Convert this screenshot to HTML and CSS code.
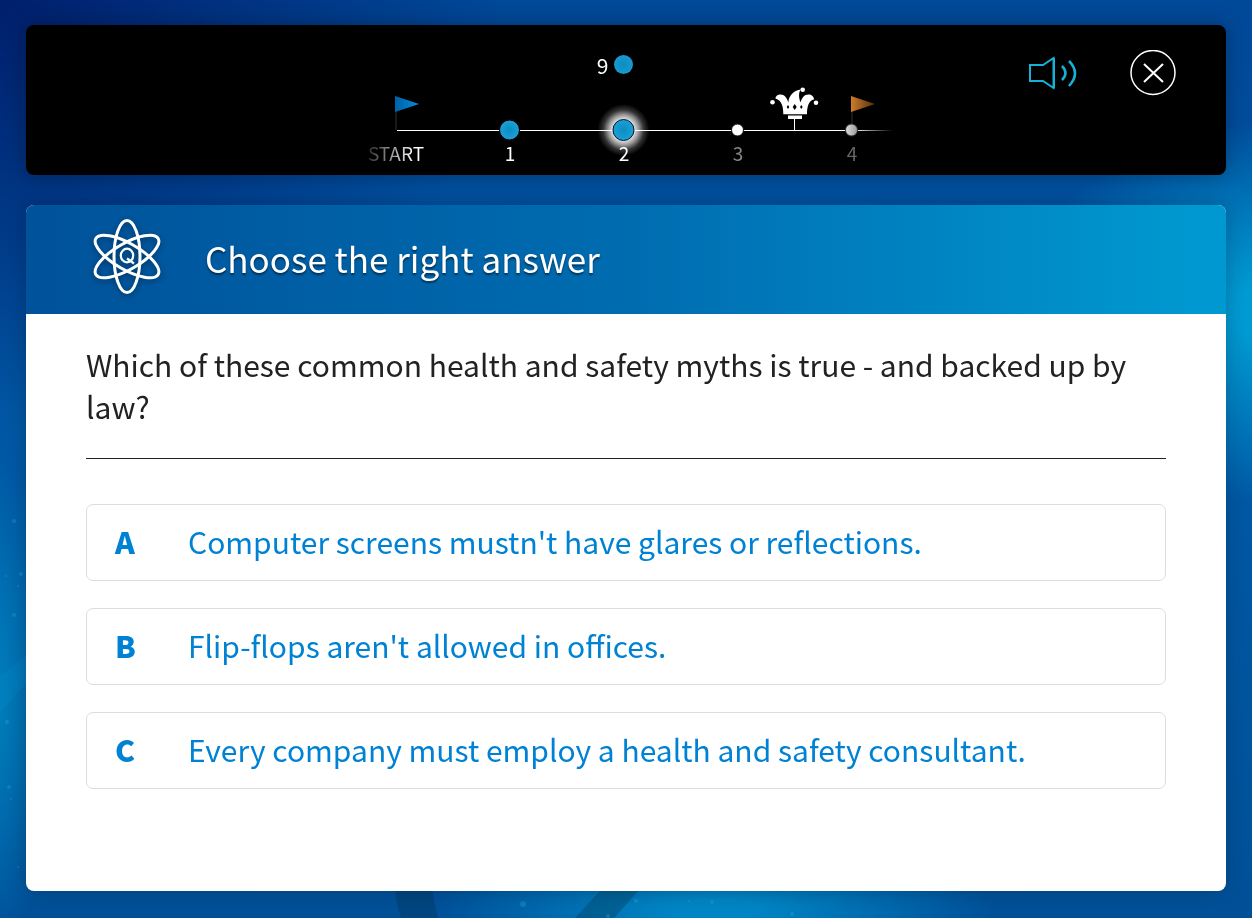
FILE: index.html
```html
<!DOCTYPE html>
<html lang="en">
<head>
<meta charset="utf-8">
<title>Quiz – Choose the right answer</title>
<link rel="stylesheet" href="styles.css">
</head>
<body>
<svg class="backdrop" viewBox="0 0 1252 918" preserveAspectRatio="none" aria-hidden="true">
  <path d="M394 880Q395 900 401 918H438Q433 900 432 880Z" fill="#003a63" opacity=".5"/>
  <path d="M610 880L575 918H614L648 880Z" fill="#004a70" opacity=".5"/>
  <path d="M0 676L26 656V684L0 712Z" fill="#00a0d8" opacity=".15"/>
  <g fill="#2ab4e4" opacity=".3">
    <circle cx="14" cy="521" r="2"/><circle cx="21" cy="574" r="2"/><circle cx="6" cy="576" r="1"/>
    <circle cx="18" cy="586" r="1"/><circle cx="14" cy="615" r="2"/><circle cx="7" cy="722" r="2"/>
    <circle cx="9" cy="787" r="2"/><circle cx="11" cy="799" r="1"/><circle cx="18" cy="867" r="1"/>
    <circle cx="523" cy="904" r="3"/><circle cx="608" cy="916" r="2"/><circle cx="636" cy="901" r="2"/>
    <circle cx="689" cy="901" r="1"/><circle cx="712" cy="902" r="2"/><circle cx="792" cy="914" r="2"/>
  </g>
</svg>
<div class="page">
  <header class="topbar">
    <div class="track">
      <div class="score"><span>9</span><i class="token"></i></div>
      <svg class="route" viewBox="0 0 570 63" aria-hidden="true">
        <defs>
          <linearGradient id="line"><stop offset="0" stop-color="#fff"/><stop offset=".92" stop-color="#fff"/><stop offset="1" stop-color="#fff" stop-opacity="0"/></linearGradient>
          <linearGradient id="blueFlag"><stop offset="0" stop-color="#0060a8"/><stop offset="1" stop-color="#0090e0"/></linearGradient>
          <linearGradient id="orangeFlag"><stop offset="0" stop-color="#cd7a2c"/><stop offset="1" stop-color="#553010"/></linearGradient>
          <linearGradient id="grey"><stop offset="0" stop-color="#ddd"/><stop offset="1" stop-color="#999"/></linearGradient>
          <radialGradient id="dot"><stop offset="0" stop-color="#0d8cc0"/><stop offset="1" stop-color="#1aa0d8"/></radialGradient>
          <radialGradient id="glow"><stop offset=".4" stop-color="#fff" stop-opacity=".9"/><stop offset=".58" stop-color="#fff" stop-opacity=".6"/><stop offset=".78" stop-color="#fff" stop-opacity=".2"/><stop offset="1" stop-color="#fff" stop-opacity="0"/></radialGradient>
        </defs>
        <rect x="58" y="50" width="496" height="1" fill="url(#line)"/>
        <path d="M57 31V50M513 31V46" stroke="#333"/>
        <path d="M56 16L80 24L56 32Z" fill="url(#blueFlag)"/>
        <path d="M512 16L536 24L512 32Z" fill="url(#orangeFlag)"/>
        <circle cx="284.500" cy="50" r="26" fill="url(#glow)"/>
        <circle cx="170.500" cy="50" r="10" fill="url(#dot)" stroke="#000"/>
        <circle cx="284.500" cy="50" r="10.500" fill="url(#dot)" stroke="#001522"/>
        <circle cx="398.500" cy="50" r="6" fill="#fff" stroke="#111"/>
        <circle cx="512.500" cy="50" r="6" fill="url(#grey)" stroke="#333"/>
        <g fill="#fff">
          <path d="M444.300 34.300C444.300 27 443 20.500 436.500 18.500C436.500 16 439 14.500 441.500 14.500C445.500 14.500 448 18 449.300 22.500C450 16 454 10.500 462 9.500C459.500 12 459.500 17 461.500 22.500C463 18 465 14.500 469.500 14.500C472.500 14.500 475 16.500 475 19.500C469.500 20.500 468 27 468 34.300Z"/>
          <circle cx="433.500" cy="22.300" r="2.300"/><circle cx="463.700" cy="9.700" r="2.300"/><circle cx="477" cy="22.700" r="2.300"/>
          <path d="M449 35.500H463V39H449Z"/><path d="M455 39H456V50H455Z"/>
        </g>
        <path d="M449 25L450.300 27L449 29L447.700 27ZM455.700 24L457.700 27L455.700 30L453.700 27ZM462.300 25L463.600 27L462.300 29L461 27Z"/>
      </svg>
      <ol class="labels">
        <li class="start">START</li><li>1</li><li>2</li><li class="dim">3</li><li class="dim far">4</li>
      </ol>
    </div>
    <div class="controls">
      <button class="icon-button" type="button" aria-label="Toggle sound">
        <svg class="speaker" viewBox="0 0 50 36" fill="none" stroke="#14b2d8"><path d="M2 10H15L25.500 3V33L15 26H2Z" stroke-width="2"/><path d="M26 3V33" stroke-width="2"/><path d="M34 11Q41 18 34 25M41 6Q53 18 41 31" stroke-width="2.500"/></svg>
      </button>
      <button class="icon-button" type="button" aria-label="Close">
        <svg class="close" viewBox="0 0 46 46" fill="none" stroke="#fff"><circle cx="23" cy="22.500" r="22" stroke-width="1.500"/><path d="M14 14L33 32M33 14L14 32" stroke-width="2"/></svg>
      </button>
    </div>
  </header>
  <main class="card">
    <div class="card-head">
      <svg class="atom" viewBox="0 0 80 84" fill="none" stroke="#fff" stroke-width="3" aria-hidden="true">
        <ellipse cx="40" cy="41.500" rx="13" ry="36"/>
        <ellipse cx="40" cy="41.500" rx="13" ry="36" transform="rotate(60 40 41.500)"/>
        <ellipse cx="40" cy="41.500" rx="13" ry="36" transform="rotate(-60 40 41.500)"/>
        <ellipse cx="40" cy="40.500" rx="6.200" ry="6.800" stroke-width="2.200"/><path d="M40 43.500L47 48.500" stroke-width="2.200"/>
      </svg>
      <h1>Choose the right answer</h1>
    </div>
    <div class="card-body">
      <p class="question">Which of these common health and safety myths is true - and backed up by law?</p>
      <div class="answers">
        <button class="answer" type="button"><b>A</b><span>Computer screens mustn't have glares or reflections.</span></button>
        <button class="answer" type="button"><b>B</b><span>Flip-flops aren't allowed in offices.</span></button>
        <button class="answer" type="button"><b>C</b><span>Every company must employ a health and safety consultant.</span></button>
      </div>
    </div>
  </main>
</div>
</body>
</html>
```
FILE: styles.css
```css
* { box-sizing: border-box; }

body {
  margin: 0;
  font-family: "Noto Sans CJK SC", "Noto Sans", sans-serif;
  background:
    radial-gradient(ellipse 260px 190px at 102% 34%, #009ad2 15%, transparent),
    radial-gradient(ellipse 100px 250px at -2% 76%, #0086c0 5%, transparent),
    radial-gradient(ellipse 280px 60px at 57% 99%, #0085c4 15%, transparent),
    radial-gradient(ellipse 500px 420px at 0 0, #001f6c, transparent),
    linear-gradient(#004898, #0058a4 50%, #005098);
}

.backdrop { position: fixed; inset: 0; width: 100%; height: 100%; z-index: -1; }

.page {
  min-height: 100vh;
  padding: 25px 26px 27px;
  display: flex;
  flex-direction: column;
  gap: 30px;
}

.topbar {
  display: grid;
  grid-template-columns: 1fr 570px 1fr;
  padding: 24px 50px 13px 46px;
  border-radius: 8px;
  background: #000;
  color: #fff;
  box-shadow: 0 0 20px rgba(0, 0, 0, .3);
}

.track { grid-column: 2; }

.score {
  display: flex;
  justify-content: center;
  align-items: center;
  gap: 6px;
  height: 31px;
  padding-right: 18px;
  font-size: 21px;
  line-height: 28px;
}

.token {
  width: 19px;
  height: 19px;
  border-radius: 50%;
  background: radial-gradient(#0d8cc0, #1aa0d8);
}

.route { display: block; width: 100%; height: 63px; overflow: visible; }

.labels {
  display: grid;
  grid-template-columns: repeat(5, 1fr);
  margin: 0;
  padding: 0;
  list-style: none;
  text-align: center;
  font-size: 19px;
  line-height: 19px;
}

.labels .start {
  color: transparent;
  background: linear-gradient(90deg, #333 30px, #fff 75px);
  background-clip: text;
}
.labels .dim { color: #888; }
.labels .far { color: #666; }

.controls { display: flex; justify-content: flex-end; align-items: flex-start; gap: 52px; }

.icon-button {
  display: flex;
  align-items: center;
  height: 48px;
  padding: 0;
  border: 0;
  background: none;
  cursor: pointer;
}
.speaker { width: 50px; height: 36px; }
.close { width: 46px; height: 46px; }

.card {
  flex: 1;
  display: flex;
  flex-direction: column;
  border-radius: 8px;
  background: #fff;
  overflow: hidden;
  box-shadow: 0 0 20px rgba(0, 0, 0, .2);
}

.card-head {
  display: flex;
  align-items: center;
  gap: 38px;
  padding: 0 61px 4px;
  height: 109px;
  color: #fff;
  background: linear-gradient(90deg, #00529a, #006cb0 50%, #0098d0 97%);
}

.atom { width: 80px; height: 84px; margin-bottom: 2px; filter: drop-shadow(0 2px 3px rgba(0, 0, 0, .4)); }

h1 {
  margin: 0;
  font-size: 35px;
  font-weight: 400;
  line-height: 50px;
  text-shadow: 0 2px 2px rgba(0, 0, 0, .5);
}

.card-body { padding: 29px 60px 60px; }

.question {
  margin: 0 0 45px;
  padding-bottom: 31px;
  border-bottom: 1px solid #222;
  color: #222;
  font-size: 30px;
  line-height: 42px;
}

.answers { display: grid; gap: 27px; }

.answer {
  display: grid;
  grid-template-columns: 73px 1fr;
  align-items: center;
  padding: 15px 28px 17px;
  border: 1px solid #ddd;
  border-radius: 7px;
  background: #fff;
  color: #0082d4;
  font-family: inherit;
  font-size: 30px;
  line-height: 43px;
  text-align: left;
  cursor: pointer;
}
.answer b { font-weight: 900; }
```
